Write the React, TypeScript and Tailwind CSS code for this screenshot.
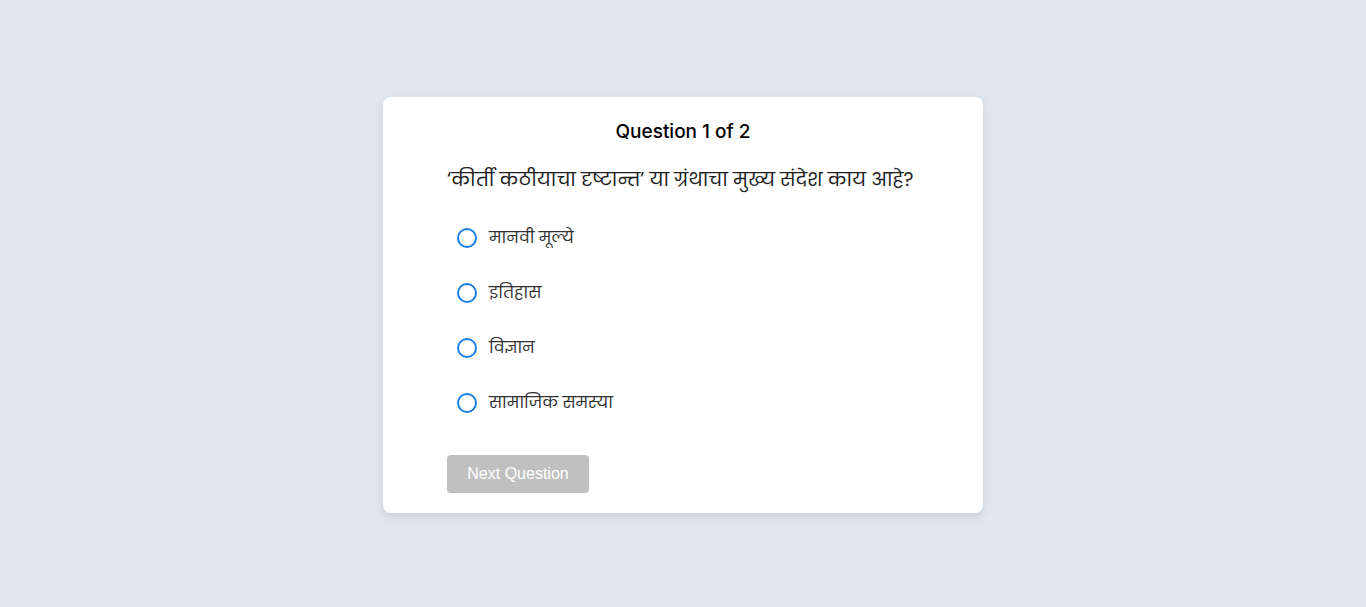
const options = ["मानवी मूल्ये", "इतिहास", "विज्ञान", "सामाजिक समस्या"];

export default function App() {
  return (
    <div className="min-h-screen bg-[#e1e7ef] flex justify-center pt-[97px] font-['Poppins','Noto_Sans','Noto_Sans_Devanagari',sans-serif]">
      <div className="w-[600px] h-fit bg-white rounded-lg shadow-[0_4px_10px_rgba(0,0,0,0.1)] px-16 pt-5 pb-5">
        <h2 className="text-center text-[19px] leading-[28px] font-medium text-black font-['Inter',sans-serif] pt-px">
          Question 1 of 2
        </h2>
        <p className="mt-5 text-[19px] leading-[28px] text-[#222] whitespace-nowrap">
          ‘कीर्ती कठीयाचा दृष्टान्त’ या ग्रंथाचा मुख्य संदेश काय आहे?
        </p>
        <div className="mt-4">
          {options.map((opt) => (
            <label key={opt} className="h-[55px] flex items-center pl-2.5 cursor-pointer">
              <span className="w-5 h-5 rounded-full border-2 border-[#1a7fe6] shrink-0"></span>
              <span className="ml-3 text-[16px] text-[#333]">{opt}</span>
            </label>
          ))}
        </div>
        <button
          disabled
          className="mt-[25px] w-[142px] h-[38px] rounded bg-[#c0c0c0] text-white text-[16px] font-['Liberation_Sans',Arial,sans-serif]"
        >
          Next Question
        </button>
      </div>
    </div>
  );
}
